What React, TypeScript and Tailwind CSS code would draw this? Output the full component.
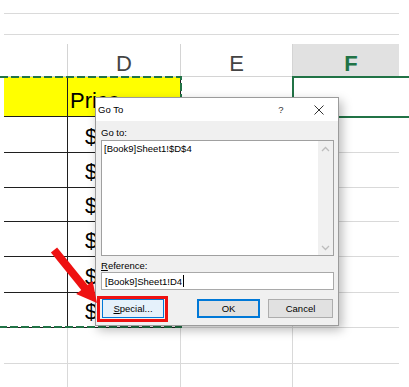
import React from "react";

const DARK = "border-[#1f1f1f]";
const LIGHT = "border-[#d9d9d9]";

type RowSpec = { h: string; dark: boolean; dollar: boolean };

const rows: RowSpec[] = [
  { h: "h-[36px]", dark: true, dollar: true },
  { h: "h-[35px]", dark: true, dollar: true },
  { h: "h-[34px]", dark: true, dollar: true },
  { h: "h-[35px]", dark: true, dollar: true },
  { h: "h-[36px]", dark: true, dollar: true },
  { h: "h-[35px]", dark: true, dollar: true },
  { h: "h-[36px]", dark: false, dollar: false },
  { h: "h-[36px]", dark: false, dollar: false },
];

function Chevron({ up }: { up: boolean }) {
  return (
    <svg width="9" height="6" viewBox="0 0 9 6">
      <polyline
        points={up ? "1,5 4.5,1.5 8,5" : "1,1 4.5,4.5 8,1"}
        fill="none"
        stroke="#bdbdbd"
        strokeWidth="1.3"
      />
    </svg>
  );
}

export default function App() {
  return (
    <div className="relative w-[409px] h-[387px] overflow-hidden bg-white font-['Liberation_Sans',Arial,sans-serif] text-black">
      <div className="pl-[4px]">
        <div className="mt-[13px] h-[22px] w-[395px] border-y border-[#dadada]" />
        {/* column header */}
        <div className="mt-[9px] flex h-[33px] w-[395px] border-b border-[#d4d4d4]">
          <div className="w-[64px] border-r border-[#d4d4d4]" />
          <div className="w-[113px] border-r border-[#d4d4d4] flex items-end justify-center text-[22px] leading-[25px] text-[#444]">
            D
          </div>
          <div className="w-[112px] border-r border-[#d4d4d4] flex items-end justify-center text-[22px] leading-[25px] text-[#444]">
            E
          </div>
          <div className="w-[106px] bg-[#e1e1e1] flex items-end justify-center pl-[10px] text-[22px] leading-[25px] font-bold text-[#217346]">
            F
          </div>
        </div>
        {/* row 1 */}
        <div className="flex h-[40px]">
          <div className={`w-[64px] bg-[#ffff00] border-r border-b ${DARK}`} />
          <div className={`w-[113px] bg-[#ffff00] border-r border-b ${DARK} flex items-end pl-[2px] pb-[3px] text-[22px] leading-[25px]`}>
            Price
          </div>
          <div className={`w-[112px] border-r border-b ${LIGHT}`} />
          <div className={`w-[106px] border-b ${LIGHT}`} />
        </div>
        {rows.map((r, i) => (
          <div key={i} className={`flex ${r.h}`}>
            <div className={`w-[64px] border-r border-b ${r.dark ? DARK : LIGHT}`} />
            <div className={`w-[113px] border-r border-b ${r.dark ? DARK : LIGHT} flex items-end pl-[17px] pb-[3px] text-[22px] leading-[25px]`}>
              {r.dollar ? "$" : ""}
            </div>
            <div className={`w-[112px] border-r border-b ${LIGHT}`} />
            <div className={`w-[106px] border-b ${LIGHT}`} />
          </div>
        ))}
      </div>

      {/* copy range marching ants */}
      <svg className="absolute left-0 top-[76px]" width="182" height="252" viewBox="0 0 182 252">
        <path
          d="M0 1 H181 V251 H0"
          fill="none"
          stroke="#217346"
          strokeWidth="2"
          strokeDasharray="8 3"
        />
      </svg>
      {/* selected cell F */}
      <div className="absolute left-[292px] top-[76px] w-[120px] h-[42px] border-t-2 border-l-2 border-b-2 border-[#217346]" />

      {/* Go To dialog */}
      <div className="absolute left-[95px] top-[97px] w-[244px] h-[229px] border border-[#9b9b9b] bg-[#f0f0f0] shadow-[3px_4px_10px_rgba(0,0,0,0.28)] flex flex-col text-[9.5px] leading-[13px]">
        <div className="h-[23px] bg-white flex items-center pl-[2px]">
          <span>Go To</span>
          <span className="ml-auto w-[20px] text-center text-[#333]">?</span>
          <span className="ml-[13px] mr-[4px] w-[30px] flex justify-center">
            <svg width="10" height="10" viewBox="0 0 10 10">
              <line x1="0.5" y1="0.5" x2="9.5" y2="9.5" stroke="#333" strokeWidth="1" />
              <line x1="9.5" y1="0.5" x2="0.5" y2="9.5" stroke="#333" strokeWidth="1" />
            </svg>
          </span>
        </div>
        <div className="flex-1 flex flex-col pl-[5px] pr-[4px]">
          <div className="mt-[5px] h-[13px]">Go to:</div>
          <div className="mt-[1px] h-[116px] border border-[#a0a0a0] bg-white flex">
            <div className="flex-1 pl-[2px] pt-[1px]">[Book9]Sheet1!$D$4</div>
            <div className="w-[15px] bg-[#f0f0f0] flex flex-col items-center justify-between pt-[5px] pb-[4px]">
              <Chevron up />
              <Chevron up={false} />
            </div>
          </div>
          <div className="mt-[3px] h-[13px]">
            <span className="underline">R</span>eference:
          </div>
          <div className="h-[18px] border border-[#a9a9a9] bg-white flex items-center pl-[3px]">
            <span>[Book9]Sheet1!D4</span>
            <span className="ml-[1px] w-px h-[12px] bg-black" />
          </div>
          <div className="mt-[9px] flex h-[19px]">
            <div className="ml-[1px] w-[62px] border border-[#0078d7] bg-[#e5f1fb] flex items-center justify-center">
              <span>
                <span className="underline">S</span>pecial...
              </span>
            </div>
            <div className="ml-auto w-[63px] border-2 border-[#0078d7] bg-[#e1e1e1] flex items-center justify-center">
              OK
            </div>
            <div className="ml-[8px] mr-[1px] w-[65px] border border-[#adadad] bg-[#e1e1e1] flex items-center justify-center">
              Cancel
            </div>
          </div>
        </div>
      </div>

      {/* red highlight box */}
      <div className="absolute left-[97px] top-[296px] w-[71px] h-[26px] border-[3px] border-[#ee1111]" />

      {/* red arrow */}
      <svg className="absolute left-[40px] top-[240px]" width="70" height="75" viewBox="0 0 70 75">
        <line x1="14" y1="10" x2="46" y2="49.5" stroke="#ee1111" strokeWidth="8" />
        <polygon points="52.6,40.9 36.2,54.1 57,63" fill="#ee1111" />
      </svg>
    </div>
  );
}
